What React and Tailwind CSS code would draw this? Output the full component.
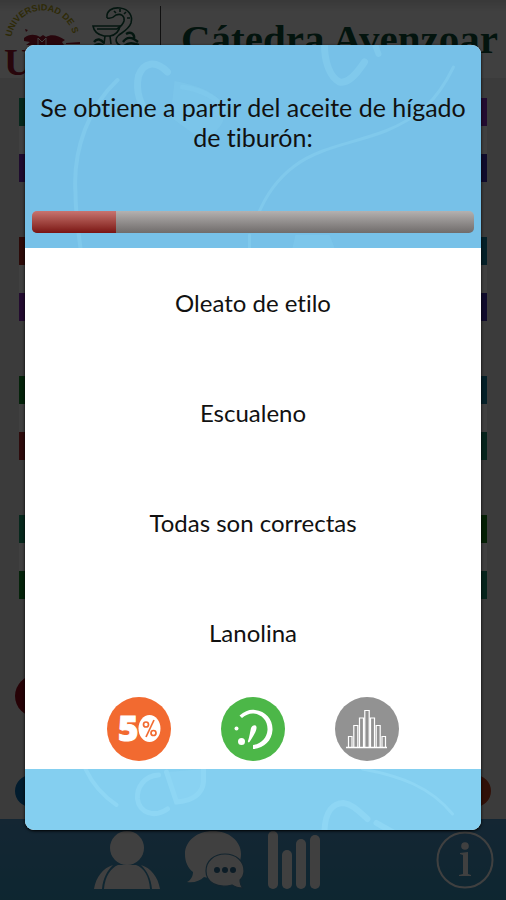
const question = {
  text: 'Se obtiene a partir del aceite de hígado de tiburón:',
  options: ['Oleato de etilo', 'Escualeno', 'Todas son correctas', 'Lanolina'],
};

const timeLeft = 19;

// each block: [top left, top right, bottom left, bottom right]
const board = [
  ['bg-[#18a070]', 'bg-[#8a2cc0]', 'bg-[#7a2cb8]', 'bg-[#402cb0]'],
  ['bg-[#b02820]', 'bg-[#1080a0]', 'bg-[#8a2cc0]', 'bg-[#402cb0]'],
  ['bg-[#108c28]', 'bg-[#1080a0]', 'bg-[#b82c30]', 'bg-[#189070]'],
  ['bg-[#18a070]', 'bg-[#108010]', 'bg-[#108c28]', 'bg-[#189070]'],
];

function UniversityLogo() {
  return (
    <svg viewBox="0 0 84 78" className="h-[78px] w-[84px] shrink-0" aria-hidden="true">
      <defs>
        <path id="seal" d="M11 42a31 31 0 0 1 63 0" />
      </defs>
      <text fontSize="9" fill="#b8a820" fontFamily="Liberation Sans" fontWeight="bold">
        <textPath href="#seal" startOffset="5">UNIVERSIDAD DE S</textPath>
      </text>
      <text x="4" y="75" fontSize="38" fill="#a01830" fontFamily="Liberation Serif" fontWeight="bold">U</text>
      <g fill="#a01830">
        <path d="M24 38c5-4 11-4 16-1l3-2 3 2c5-3 12-2 19 3l-3 2 2 3H26l4-3-6-1z" />
        <path d="M25 29l3 1-2 2zM66 43l14-1v2H66z" />
      </g>
      <path d="M38 45v-7l4 4 4-4v7" fill="none" stroke="#fff" strokeWidth="1" />
    </svg>
  );
}

function PharmacyLogo() {
  return (
    <svg viewBox="0 0 54 62" className="h-[62px] w-[54px] shrink-0" fill="none" stroke="#105840" strokeWidth="1.6" aria-hidden="true">
      <path d="M3 26h27c-1 6-5 9-10 10h-6c-5-1-10-4-11-10z" />
      <path d="M7 29h20M15 36l-1 8M20 36l1 8" />
      <path d="M17 18c-1-7 5-11 13-10 9 1 13 8 11 15-2 6-8 9-12 12-5 4-3 9 2 11" />
      <path d="M17 18c4 1 7-1 9-3 5-2 9 1 8 6-1 4-4 6-7 8" />
      <path d="M24 11l2 2M30 9v3M36 12l-2 2M40 18h-3" />
      <path d="M4 42c3-4 7-3 10 1M4 46c4-3 7-2 10 0M33 42c4-6 9-5 15 0M34 46c5-4 9-3 15-1M36 34c5-3 9 0 8 5" strokeWidth="2.4" />
    </svg>
  );
}

function HeadPattern() {
  return (
    <svg viewBox="0 0 457 203" preserveAspectRatio="xMidYMid slice" className="absolute inset-0 h-full w-full" fill="none" stroke="#80c9ec" strokeLinecap="round" aria-hidden="true">
      <path d="M143 27C131 15 119 17 114 31c-3 14 1 30 12 40" strokeWidth="7" />
      <path d="M150 36l-4 36 30 22c18-4 30-22 21-36-8-12-26-18-47-22z" fill="#80c9ec" stroke="none" opacity="0.5" />
      <path d="M158 42c22 3 38 14 42 22" strokeWidth="5" opacity="0.6" />
      <path d="M93 35C65 61 48 104 51 148c0 22 3 40 5 55" strokeWidth="4" />
      <path d="M300 0c0 16 5 32 15 37 9 2 17-8 25-20" strokeWidth="7" />
      <path d="M351 1l3 8" strokeWidth="6" />
      <path d="M429 22c-17 35-36 51-68 64-31 12-66 16-91 35-16 12-28 27-37 50" strokeWidth="3" />
      <path d="M271 190h34l5 13h-42z" fill="#80c9ec" stroke="none" opacity="0.6" />
      <path d="M225 190v13" strokeWidth="3" />
    </svg>
  );
}

function FootPattern() {
  return (
    <svg viewBox="0 0 457 61" preserveAspectRatio="xMidYMid slice" className="absolute inset-0 h-full w-full" fill="none" stroke="#8ed6f4" strokeLinecap="round" aria-hidden="true">
      <path d="M61 0c7 15 16 26 31 36" strokeWidth="4" />
      <path d="M134 6c-14 1-22 12-21 24 2 14 17 19 30 10" strokeWidth="5" />
      <path d="M142 3l10 30c17-1 26-9 27-20V0" strokeWidth="5" fill="#8ed6f4" fillOpacity="0.5" />
      <path d="M338 0c38 7 68 18 90 45" strokeWidth="3" />
      <path d="M300 61c1-19 9-27 19-27 8 1 14 7 24 16" strokeWidth="6" />
      <path d="M352 54l16 9" strokeWidth="6" />
    </svg>
  );
}

function FiftyIcon() {
  return (
    <svg viewBox="0 0 64 64" className="size-16" aria-hidden="true">
      <circle cx="32" cy="32" r="32" fill="#f26a30" />
      <text x="11" y="44" fontSize="35" fontWeight="900" fontFamily="Open Sans" fill="#fff" stroke="#fff">5</text>
      <ellipse cx="42.500" cy="31.500" rx="11" ry="13.500" fill="#fff" />
      <g fill="none" stroke="#f26a30" strokeWidth="1.700">
        <circle cx="39" cy="27.500" r="2.500" />
        <circle cx="46.500" cy="36" r="2.500" />
        <path d="M47 23l-8 17" />
      </g>
    </svg>
  );
}

function TimeIcon() {
  return (
    <svg viewBox="0 0 64 64" className="size-16" aria-hidden="true">
      <circle cx="32" cy="32" r="32" fill="#4cb748" />
      <path d="M18.500 18.500C24 13.500 30 12 34 13c11 1 18 10 17.500 20-.5 11-9 18.500-19.500 19v-4c8-1 14-7 14.500-15C47 24 41 17.500 33 16.500c-4-.5-8 1-12 4.500z" fill="#fff" />
      <path d="M30 31c1-3 5-4 5.500-1 .500 4-4 10-7 15-1 1-2 0-1.500-1 1.500-4 2-9 3-13z" fill="#fff" />
      <circle cx="20.500" cy="44.500" r="3.500" fill="#fff" />
      <circle cx="15.500" cy="31.500" r="2" fill="#fff" />
    </svg>
  );
}

function StatsIcon() {
  return (
    <svg viewBox="0 0 64 64" className="size-16" aria-hidden="true">
      <circle cx="32" cy="32" r="32" fill="#929292" />
      <g fill="none" stroke="#fff" strokeWidth="1.200">
        <path d="M11 50.500h41" strokeWidth="1.600" />
        <path d="M13.500 50V39.500H17V50M18.800 50V28.500h4V50M24.500 50V21h4V50M29.800 50V13.500h4.400V50M35.500 50V21h4V50M41.200 50V28.500h4V50M47 50V39.500h3.500V50" />
      </g>
    </svg>
  );
}

const lifelines = [
  { label: 'Cincuenta por ciento', Icon: FiftyIcon },
  { label: 'Más tiempo', Icon: TimeIcon },
  { label: 'Estadísticas', Icon: StatsIcon },
];

function BottomNav() {
  return (
    <nav className="flex h-[81px] items-center gap-6 bg-linear-to-b from-[#5098cc] to-[#3898c0] pr-3 pl-[94px] text-white">
      <button type="button" aria-label="Perfil">
        <svg viewBox="0 0 66 58" className="h-[58px] w-[66px]" fill="currentColor">
          <circle cx="33" cy="17" r="17" />
          <path d="M10 58c1-13 7-21 14-24h18c8 3 13 11 14 24z" />
          <path d="M0 58c2-12 9-21 19-24-6 6-10 13-11 24zM66 58c-2-12-9-21-19-24 6 6 10 13 11 24z" />
        </svg>
      </button>
      <button type="button" aria-label="Mensajes">
        <svg viewBox="0 0 60 58" className="h-[58px] w-[60px]" fill="currentColor">
          <path d="M29 0c16 0 28 10 28 23 0 14-12 24-28 24-3 0-6 0-9-1-4 4-10 6-17 5 4-2 6-6 6-10C4 37 1 31 1 23 1 10 13 0 29 0z" />
          <path d="M41 23c11 0 19 7 19 17 0 4-2 7-4 9 0 3 1 6 3 8-4 0-8-1-11-3-15 4-26-3-26-14 0-10 8-17 19-17z" stroke="#4a90b8" strokeWidth="1.200" />
          <g fill="#307098">
            <circle cx="33" cy="39" r="3" />
            <circle cx="41" cy="39" r="3" />
            <circle cx="49" cy="39" r="3" />
          </g>
        </svg>
      </button>
      <button type="button" aria-label="Clasificación" className="flex h-[58px] items-end gap-1">
        <span className="h-[58px] w-[10px] rounded-full bg-current" />
        <span className="h-[39px] w-[10px] rounded-full bg-current" />
        <span className="h-[50px] w-[10px] rounded-full bg-current" />
        <span className="h-[54px] w-[10px] rounded-full bg-current" />
      </button>
      <button type="button" aria-label="Información" className="ml-auto">
        <svg viewBox="0 0 58 58" className="size-[58px]" fill="currentColor">
          <circle cx="29" cy="29" r="27.500" fill="none" stroke="currentColor" strokeWidth="2" />
          <circle cx="29" cy="15" r="3.800" />
          <path d="M24 22l8-1v22l3 1v1H23v-1l4-1V24l-3-1z" />
        </svg>
      </button>
    </nav>
  );
}

function QuestionDialog() {
  return (
    <div className="absolute inset-0 bg-black/75 px-[25px] pt-[45px]">
      <div
        role="dialog"
        aria-labelledby="question"
        className="overflow-hidden rounded-[9px] bg-white font-['Lato',sans-serif] text-2xl text-[#111] shadow-[0_1px_3px_#000] [font-variant-ligatures:none]"
      >
        <div className="relative bg-[#77c1e8] px-[7px] pt-[47px] pb-[15px]">
          <HeadPattern />
          <div className="relative">
            <h1 id="question" className="text-center text-[25px] leading-[30px]">{question.text}</h1>
            <div
              role="progressbar"
              aria-label="Tiempo"
              aria-valuenow={timeLeft}
              className="mt-[59px] h-[22px] overflow-hidden rounded-[5px] bg-linear-to-b from-[#b4b1b0] to-[#706c6b]"
            >
              <div className="h-full bg-linear-to-b from-[#c87470] to-[#7a1212]" style={{ width: `${timeLeft}%` }} />
            </div>
          </div>
        </div>

        <div className="flex flex-col">
          {question.options.map((option) => (
            <button key={option} type="button" className="h-[110px] w-full">
              {option}
            </button>
          ))}
        </div>

        <div className="flex h-[81px] items-center justify-center gap-[50px]">
          {lifelines.map(({ label, Icon }) => (
            <button key={label} type="button" aria-label={label}>
              <Icon />
            </button>
          ))}
        </div>

        <div className="relative h-[61px] bg-[#84cff0]">
          <FootPattern />
        </div>
      </div>
    </div>
  );
}

export default function App() {
  return (
    <div className="relative flex min-h-screen flex-col bg-[#ececec]">
      <header className="flex h-[78px] items-start overflow-hidden bg-linear-to-b from-[#e0e0e0] to-white to-15%">
        <UniversityLogo />
        <div className="ml-[6px]">
          <PharmacyLogo />
        </div>
        <div className="mt-[6px] ml-4 h-14 w-px shrink-0 bg-[#404040]" />
        <p className="mt-4 ml-5 font-['Liberation_Serif',serif] text-[41px] leading-[46px] font-bold whitespace-nowrap text-[#0c5038]">
          Cátedra Avenzoar
        </p>
      </header>

      <main className="flex-1 px-[19px] pt-5 pb-[11px]">
        <div className="flex flex-col gap-[55px]">
          {board.map(([a, b, c, d], i) => (
            <div key={i} className="grid grid-cols-2 grid-rows-3 bg-white">
              <span className={`h-7 ${a}`} />
              <span className={`h-7 ${b}`} />
              <span className="col-span-2 h-7" />
              <span className={`h-7 ${c}`} />
              <span className={`h-7 ${d}`} />
            </div>
          ))}
        </div>
        <div className="-mx-1 mt-[76px] size-[42px] rounded-full bg-[#980818]" />
        <div className="-mx-1 mt-[58px] flex justify-between">
          <div className="size-8 rounded-full bg-[#0870b8]" />
          <div className="size-8 rounded-full bg-[#c04020]" />
        </div>
      </main>

      <BottomNav />
      <QuestionDialog />
    </div>
  );
}
